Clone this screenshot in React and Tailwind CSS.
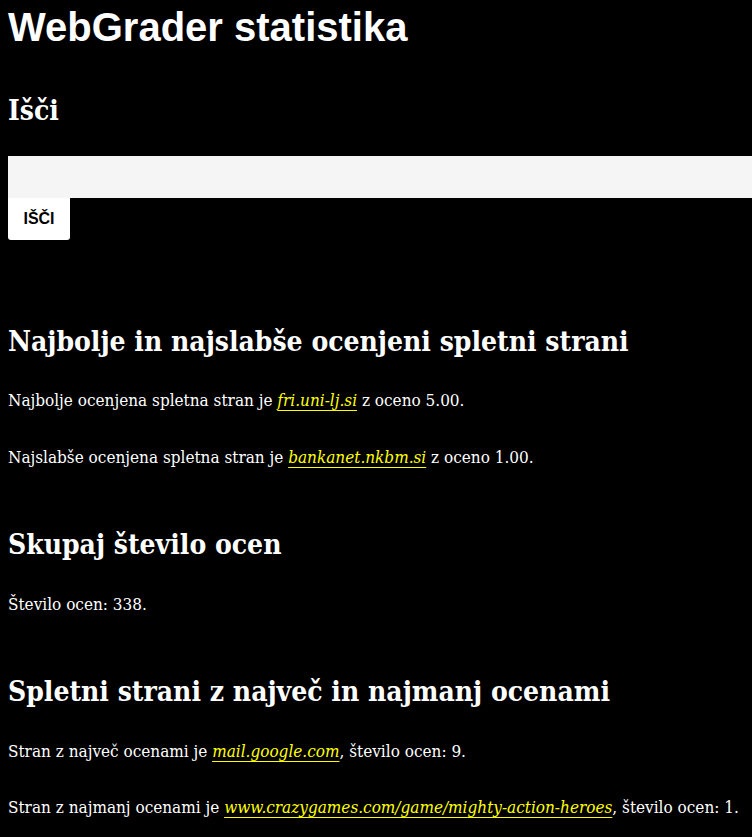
import React from 'react';

const serif = { fontFamily: '"DejaVu Serif Condensed", "DejaVu Serif", serif' };

const Link = ({ children }) => (
  <a href="#" className="italic text-[#ffff00] underline decoration-1 underline-offset-[4px]">
    {children}
  </a>
);

const Heading = ({ children, className = '' }) => (
  <h2 className={`text-[28px] leading-[36px] font-bold text-white ${className}`} style={serif}>
    {children}
  </h2>
);

const Para = ({ children, className = '' }) => (
  <p className={`text-[17px] leading-[24px] text-white ${className}`} style={serif}>
    {children}
  </p>
);

export default function App() {
  return (
    <div className="min-h-screen bg-black pl-2 overflow-hidden">
      <h1
        className="pt-[4px] text-[40px] leading-[46px] font-bold text-white"
        style={{ fontFamily: '"Liberation Sans", Arial, sans-serif' }}
      >
        WebGrader statistika
      </h1>

      <Heading className="mt-[43px]">Išči</Heading>

      <form className="mt-[27px] flex flex-col items-start" onSubmit={(e) => e.preventDefault()}>
        <input type="text" className="w-full h-[42px] bg-[#f5f5f5] outline-none" />
        <button
          type="submit"
          className="w-[62px] h-[42px] bg-white rounded-b-[3px] text-[16px] font-bold text-black"
          style={{ fontFamily: '"Liberation Sans", Arial, sans-serif' }}
        >
          IŠČI
        </button>
      </form>

      <Heading className="mt-[84px]">Najbolje in najslabše ocenjeni spletni strani</Heading>
      <Para className="mt-[28px]">
        Najbolje ocenjena spletna stran je <Link>fri.uni-lj.si</Link> z oceno 5.00.
      </Para>
      <Para className="mt-[33px]">
        Najslabše ocenjena spletna stran je <Link>bankanet.nkbm.si</Link> z oceno 1.00.
      </Para>

      <Heading className="mt-[58px]">Skupaj število ocen</Heading>
      <Para className="mt-[29px]">Število ocen: 338.</Para>

      <Heading className="mt-[58px]">Spletni strani z največ in najmanj ocenami</Heading>
      <Para className="mt-[29px]">
        Stran z največ ocenami je <Link>mail.google.com</Link>, število ocen: 9.
      </Para>
      <Para className="mt-[32px] pb-8">
        Stran z najmanj ocenami je <Link>www.crazygames.com/game/mighty-action-heroes</Link>, število ocen: 1.
      </Para>
    </div>
  );
}
